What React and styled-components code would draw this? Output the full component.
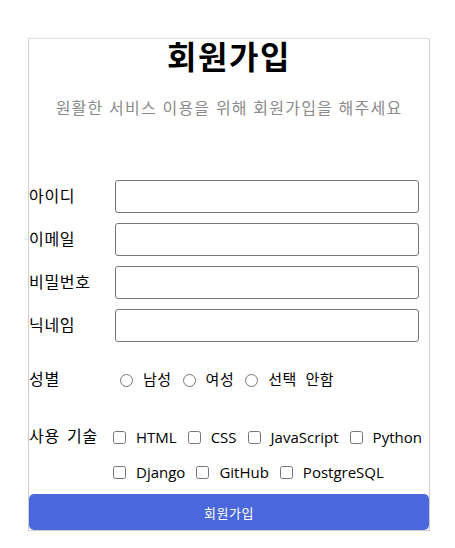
import React from "react";
import styled, { createGlobalStyle } from "styled-components";

const GlobalStyle = createGlobalStyle`
  body {
    margin: 0;
    background: #fff;
    font-family: "Liberation Sans", "Noto Sans CJK KR", sans-serif;
    color: #000;
  }
`;

const Page = styled.div`
  padding: 38px 0 0 28px;
`;

const Card = styled.form`
  width: 400px;
  border: 1px solid #cfcfcf;
  border-top-color: #dedede;
  display: flex;
  flex-direction: column;
`;

const Title = styled.h1`
  margin: 0;
  font-size: 32px;
  line-height: 38px;
  font-weight: 700;
  letter-spacing: 1.5px;
  text-align: center;
`;

const Subtitle = styled.p`
  margin: 20px 0 0;
  font-size: 16px;
  line-height: 24px;
  letter-spacing: 1.2px;
  color: #8a8a8a;
  text-align: center;
`;

const Fields = styled.div`
  margin-top: 59px;
  display: flex;
  flex-direction: column;
  gap: 10px;
`;

const Row = styled.div`
  display: flex;
  align-items: ${(p) => (p.$top ? "flex-start" : "center")};
  margin-top: ${(p) => p.$mt || 0}px;
`;

const Label = styled.label`
  width: 86px;
  flex-shrink: 0;
  font-size: 16px;
  line-height: 24px;
  letter-spacing: 0.7px;
  word-spacing: 2px;
`;

const Input = styled.input`
  width: 304px;
  height: 33px;
  box-sizing: border-box;
  border: 1px solid #767676;
  border-radius: 3px;
  padding: 0 8px;
  font: inherit;
  &:focus {
    outline: none;
  }
`;

const Options = styled.div`
  display: flex;
  flex-wrap: wrap;
  align-items: center;
  row-gap: 11px;
  column-gap: ${(p) => p.$gap || 11}px;
  line-height: 24px;
  width: 318px;
  margin-left: ${(p) => p.$shift || 0}px;
`;

const Option = styled.label`
  display: flex;
  align-items: center;
  gap: 10px;
  white-space: nowrap;
  font-family: ${(p) => (p.$ko ? '"Liberation Sans", "Noto Sans CJK KR"' : '"Open Sans", "Noto Sans CJK KR"')}, sans-serif;
  font-size: 15px;
  letter-spacing: ${(p) => (p.$ko ? 0.5 : 0)}px;
  word-spacing: ${(p) => (p.$ko ? 4 : 0)}px;
`;

const Radio = styled.input.attrs({ type: "radio" })`
  width: 13px;
  height: 13px;
  margin: 0 0 0 5px;
`;

const Check = styled.input.attrs({ type: "checkbox" })`
  width: 13px;
  height: 13px;
  margin: 0;
`;

const Submit = styled.button`
  margin-top: 10px;
  height: 36px;
  border: none;
  border-radius: 5px;
  background: #4a68dc;
  color: #fff;
  font-family: inherit;
  font-size: 13px;
  letter-spacing: 0.5px;
`;

const skills = ["HTML", "CSS", "JavaScript", "Python", "Django", "GitHub", "PostgreSQL"];

const App = () => {
  return (
    <Page>
      <GlobalStyle />
      <Card onSubmit={(e) => e.preventDefault()}>
        <Title>회원가입</Title>
        <Subtitle>원활한 서비스 이용을 위해 회원가입을 해주세요</Subtitle>
        <Fields>
          <Row><Label>아이디</Label><Input type="text" /></Row>
          <Row><Label>이메일</Label><Input type="email" /></Row>
          <Row><Label>비밀번호</Label><Input type="password" /></Row>
          <Row><Label>닉네임</Label><Input type="text" /></Row>
        </Fields>
        <Row $mt={26}>
          <Label>성별</Label>
          <Options $gap={6}>
            <Option $ko><Radio name="gender" />남성</Option>
            <Option $ko><Radio name="gender" />여성</Option>
            <Option $ko><Radio name="gender" />선택 안함</Option>
          </Options>
        </Row>
        <Row $mt={33} $top>
          <Label>사용 기술</Label>
          <Options $shift={-2}>
            {skills.map((s) => (
              <Option key={s}><Check />{s}</Option>
            ))}
          </Options>
        </Row>
        <Submit type="submit">회원가입</Submit>
      </Card>
    </Page>
  );
};

export default App;
